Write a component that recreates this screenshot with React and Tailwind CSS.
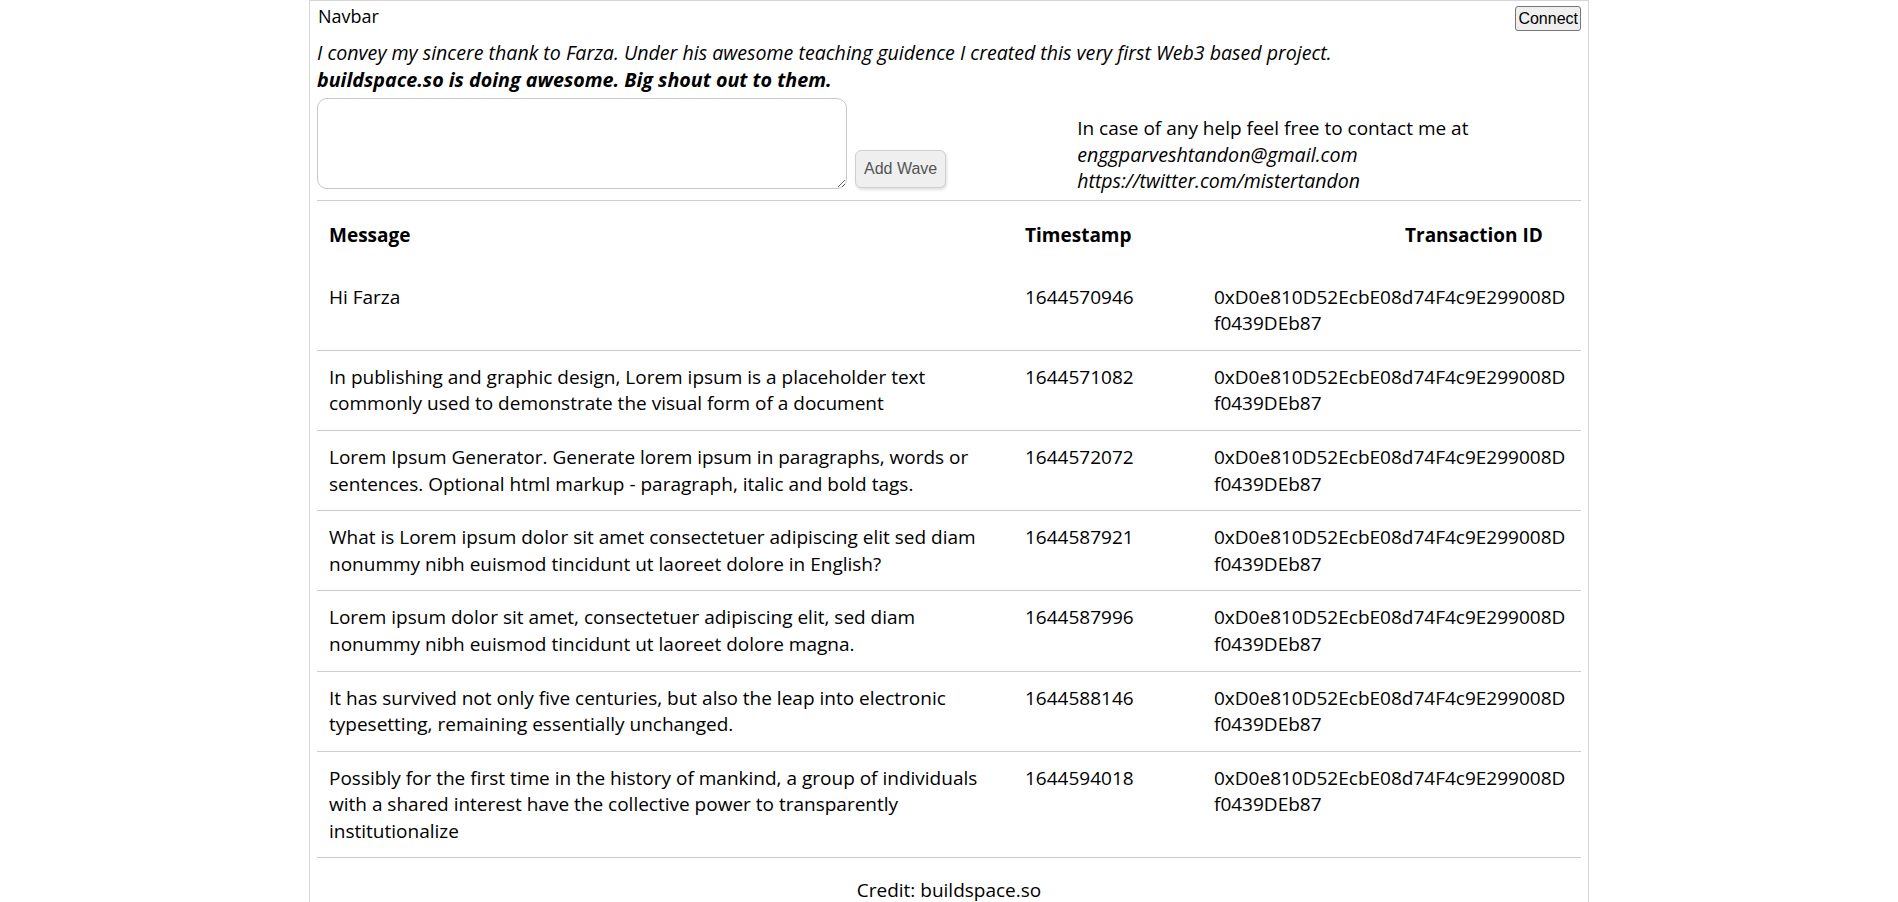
const TX = ["0xD0e810D52EcbE08d74F4c9E299008D", "f0439DEb87"];

const waves = [
  { msg: ["Hi Farza"], ts: "1644570946" },
  {
    msg: ["In publishing and graphic design, Lorem ipsum is a placeholder text", "commonly used to demonstrate the visual form of a document"],
    ts: "1644571082",
  },
  {
    msg: ["Lorem Ipsum Generator. Generate lorem ipsum in paragraphs, words or", "sentences. Optional html markup - paragraph, italic and bold tags."],
    ts: "1644572072",
  },
  {
    msg: ["What is Lorem ipsum dolor sit amet consectetuer adipiscing elit sed diam", "nonummy nibh euismod tincidunt ut laoreet dolore in English?"],
    ts: "1644587921",
  },
  {
    msg: ["Lorem ipsum dolor sit amet, consectetuer adipiscing elit, sed diam", "nonummy nibh euismod tincidunt ut laoreet dolore magna."],
    ts: "1644587996",
  },
  {
    msg: ["It has survived not only five centuries, but also the leap into electronic", "typesetting, remaining essentially unchanged."],
    ts: "1644588146",
  },
  {
    msg: [
      "Possibly for the first time in the history of mankind, a group of individuals",
      "with a shared interest have the collective power to transparently",
      "institutionalize",
    ],
    ts: "1644594018",
  },
];

function Lines({ lines }) {
  return lines.map((l, i) => (
    <div key={i} className="whitespace-nowrap">
      {l}
    </div>
  ));
}

export default function App() {
  return (
    <div className="min-h-screen bg-white font-['Open_Sans',sans-serif] text-[19px] leading-[26.6px] text-black">
      <div className="mx-auto w-[1280px] border-x border-t border-[#d6d6d6] px-[7px] pb-[20px]">
        {/* Navbar */}
        <div className="flex items-start justify-between pt-[2px]">
          <span className="pl-[1px] text-[18px]">Navbar</span>
          <button className="mt-[3px] rounded-[3px] border border-[#767676] bg-[#efefef] px-[2px] py-[2px] font-['Liberation_Sans',Arial,sans-serif] text-[16px] leading-[19px]">
            Connect
          </button>
        </div>

        {/* Thanks */}
        <div className="mt-[9px]">
          <p className="whitespace-nowrap text-[19.6px] italic">
            I convey my sincere thank to Farza. Under his awesome teaching guidence I created this very first Web3 based project.
          </p>
          <p className="text-[19.7px] font-bold italic">buildspace.so is doing awesome. Big shout out to them.</p>
        </div>

        {/* Wave input + contact */}
        <div className="mt-[5px] flex items-start">
          <div className="flex items-end gap-[8px]">
            <textarea className="h-[91px] w-[530px] resize-y rounded-[10px] border border-[#c8c8c8] bg-white p-2 outline-none" />
            <button className="mb-[1px] h-[38px] rounded-[6px] border border-[#cfcfcf] bg-[#efefef] px-[8px] font-['Liberation_Sans',Arial,sans-serif] text-[16px] text-[#555] shadow-[1px_2px_3px_rgba(0,0,0,0.12)]">
              Add Wave
            </button>
          </div>
          <div className="ml-[131px] mt-[17px]">
            <div>In case of any help feel free to contact me at</div>
            <div className="text-[19.7px] italic">enggparveshtandon@gmail.com</div>
            <div className="text-[19.5px] italic">https://twitter.com/mistertandon</div>
          </div>
        </div>

        {/* Waves table */}
        <div className="mt-[5px] border-t border-[#cdcdcd]">
          <div className="grid grid-cols-[696px_189px_1fr] pb-[22px] pt-[21px] font-bold">
            <div className="px-[12px]">Message</div>
            <div className="px-[12px]">Timestamp</div>
            <div className="pl-[203px]">Transaction ID</div>
          </div>
          {waves.map((w) => (
            <div key={w.ts} className="grid grid-cols-[696px_189px_1fr] border-b border-[#cdcdcd] py-[13px]">
              <div className="px-[12px]">
                <Lines lines={w.msg} />
              </div>
              <div className="px-[12px]">{w.ts}</div>
              <div className="px-[12px]">
                <Lines lines={TX} />
              </div>
            </div>
          ))}
        </div>

        <div className="pt-[19px] text-center">Credit: buildspace.so</div>
      </div>
    </div>
  );
}
